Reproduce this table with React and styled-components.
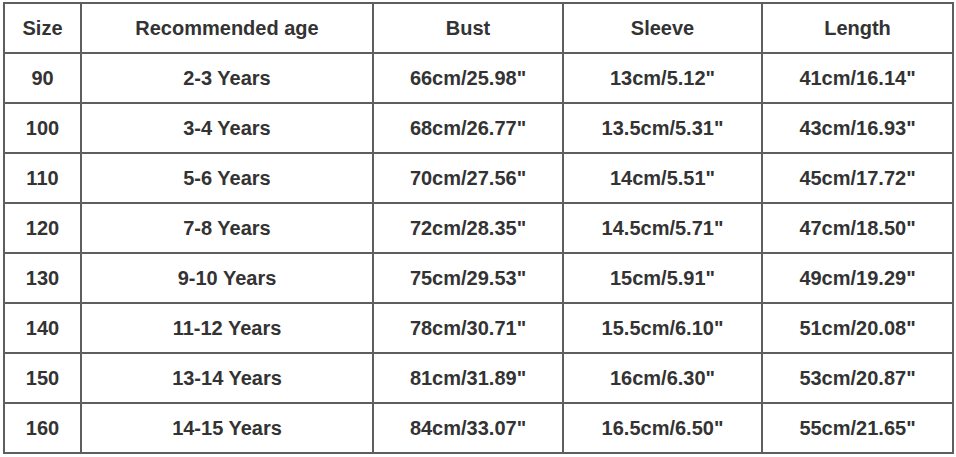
import React from "react";
import styled, { createGlobalStyle } from "styled-components";

const Global = createGlobalStyle`
  html, body { margin: 0; padding: 0; background: #fff; }
  body { font-family: "Liberation Sans", Arial, sans-serif; }
`;

const Page = styled.div`
  padding: 2px 0 0 3px;
`;

const Grid = styled.div`
  display: grid;
  grid-template-columns: 75px 290px 188px 197px 189px;
  grid-auto-rows: 48px;
  gap: 2px;
  padding: 2px;
  width: max-content;
  background: #5e5e5e;
`;

const Cell = styled.div`
  background: #fff;
  display: flex;
  align-items: center;
  justify-content: center;
  font-size: 20px;
  font-weight: bold;
  color: #333;
  white-space: nowrap;
`;

const header = ["Size", "Recommended age", "Bust", "Sleeve", "Length"];
const rows = [
  ["90", "2-3 Years", '66cm/25.98"', '13cm/5.12"', '41cm/16.14"'],
  ["100", "3-4 Years", '68cm/26.77"', '13.5cm/5.31"', '43cm/16.93"'],
  ["110", "5-6 Years", '70cm/27.56"', '14cm/5.51"', '45cm/17.72"'],
  ["120", "7-8 Years", '72cm/28.35"', '14.5cm/5.71"', '47cm/18.50"'],
  ["130", "9-10 Years", '75cm/29.53"', '15cm/5.91"', '49cm/19.29"'],
  ["140", "11-12 Years", '78cm/30.71"', '15.5cm/6.10"', '51cm/20.08"'],
  ["150", "13-14 Years", '81cm/31.89"', '16cm/6.30"', '53cm/20.87"'],
  ["160", "14-15 Years", '84cm/33.07"', '16.5cm/6.50"', '55cm/21.65"'],
];

export default function App() {
  return (
    <>
      <Global />
      <Page>
        <Grid>
          {header.map((h) => (
            <Cell key={h}>{h}</Cell>
          ))}
          {rows.map((r, i) =>
            r.map((c, j) => <Cell key={i + "-" + j}>{c}</Cell>)
          )}
        </Grid>
      </Page>
    </>
  );
}
